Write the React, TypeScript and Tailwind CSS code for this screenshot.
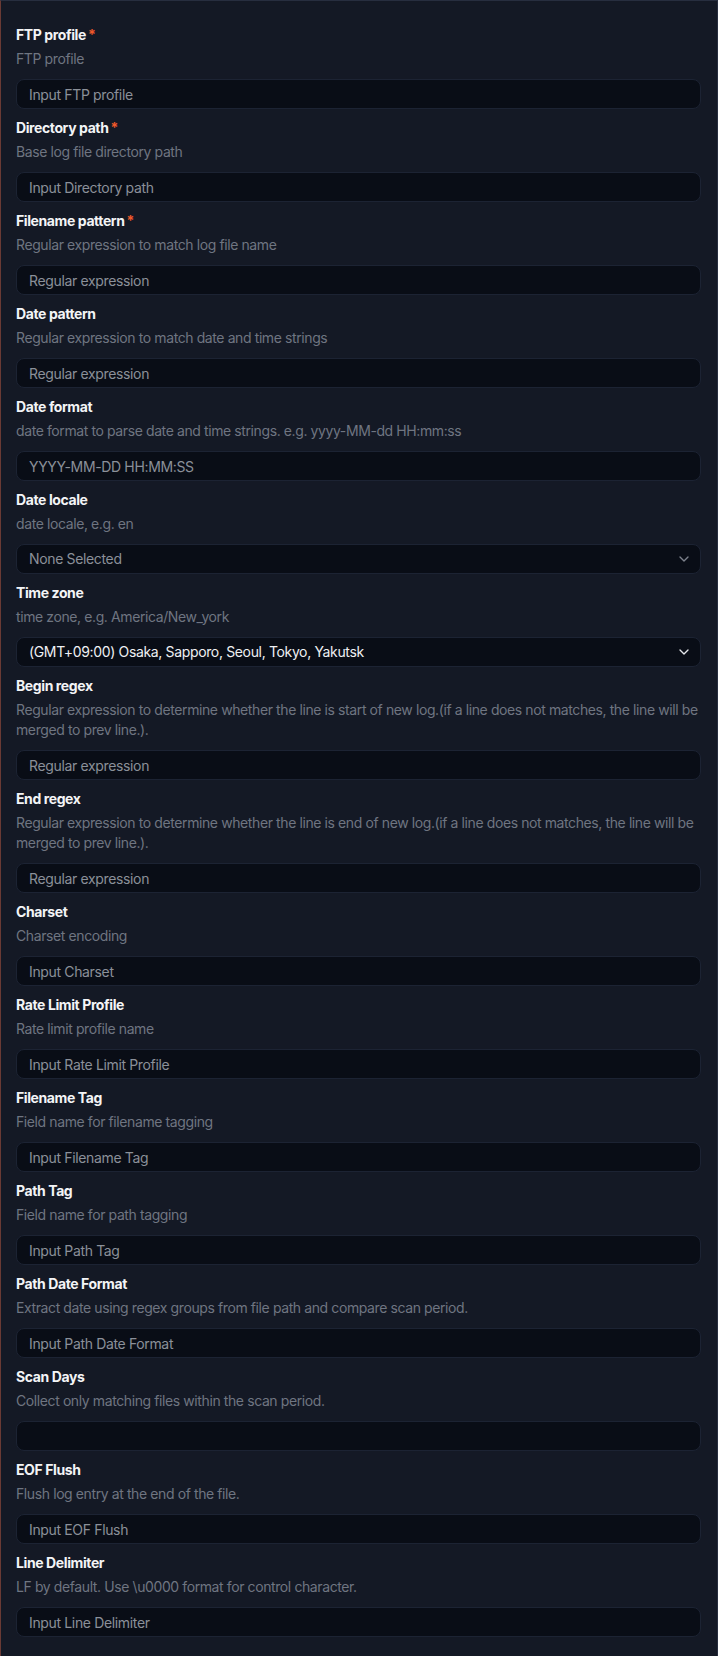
import { ChevronDown } from "lucide-react";

type Field = {
  label: string;
  description: string;
  placeholder?: string;
  required?: boolean;
  select?: { value: string; placeholder?: boolean };
};

const fields: Field[] = [
  { label: "FTP profile", description: "FTP profile", placeholder: "Input FTP profile", required: true },
  { label: "Directory path", description: "Base log file directory path", placeholder: "Input Directory path", required: true },
  { label: "Filename pattern", description: "Regular expression to match log file name", placeholder: "Regular expression", required: true },
  { label: "Date pattern", description: "Regular expression to match date and time strings", placeholder: "Regular expression" },
  { label: "Date format", description: "date format to parse date and time strings. e.g. yyyy-MM-dd HH:mm:ss", placeholder: "YYYY-MM-DD HH:MM:SS" },
  { label: "Date locale", description: "date locale, e.g. en", select: { value: "None Selected", placeholder: true } },
  { label: "Time zone", description: "time zone, e.g. America/New_york", select: { value: "(GMT+09:00) Osaka, Sapporo, Seoul, Tokyo, Yakutsk" } },
  {
    label: "Begin regex",
    description:
      "Regular expression to determine whether the line is start of new log.(if a line does not matches, the line will be merged to prev line.).",
    placeholder: "Regular expression",
  },
  {
    label: "End regex",
    description:
      "Regular expression to determine whether the line is end of new log.(if a line does not matches, the line will be merged to prev line.).",
    placeholder: "Regular expression",
  },
  { label: "Charset", description: "Charset encoding", placeholder: "Input Charset" },
  { label: "Rate Limit Profile", description: "Rate limit profile name", placeholder: "Input Rate Limit Profile" },
  { label: "Filename Tag", description: "Field name for filename tagging", placeholder: "Input Filename Tag" },
  { label: "Path Tag", description: "Field name for path tagging", placeholder: "Input Path Tag" },
  { label: "Path Date Format", description: "Extract date using regex groups from file path and compare scan period.", placeholder: "Input Path Date Format" },
  { label: "Scan Days", description: "Collect only matching files within the scan period.", placeholder: "" },
  { label: "EOF Flush", description: "Flush log entry at the end of the file.", placeholder: "Input EOF Flush" },
  { label: "Line Delimiter", description: "LF by default. Use \\u0000 format for control character.", placeholder: "Input Line Delimiter" },
];

const FormField = ({ field }: { field: Field }) => {
  return (
    <div className="flex flex-col">
      <label className="text-sm leading-5 font-bold text-[#f3f4f6] mb-1">
        {field.label}
        {field.required && <span className="ml-0.5 text-[#f0582a]">*</span>}
      </label>
      <p className="text-sm leading-5 text-[#6f7581]">{field.description}</p>
      {field.select ? (
        <button
          type="button"
          className="mt-2.5 h-[30px] w-full flex items-center justify-between rounded-lg border border-[#1c2333] bg-[#090d16] pl-3 pr-2 text-left text-sm tracking-tight"
        >
          <span className={field.select.placeholder ? "text-[#8b9099]" : "text-[#eef0f3]"}>{field.select.value}</span>
          <ChevronDown
            size={16}
            strokeWidth={2}
            className={field.select.placeholder ? "text-[#7d828c]" : "text-[#e5e7eb]"}
          />
        </button>
      ) : (
        <input
          type="text"
          placeholder={field.placeholder}
          className="mt-2.5 h-[30px] w-full rounded-lg border border-[#1c2333] bg-[#090d16] px-3 text-sm tracking-tight text-[#eef0f3] placeholder:text-[#8b9099] outline-none"
        />
      )}
    </div>
  );
};

const App = () => {
  return (
    <div className="min-h-screen bg-[#141925] border-t border-r border-[#272e3f] border-l border-l-[#6a3a34] pl-[15px] pr-4 pt-6 pb-4 tracking-tight font-['Inter','Noto_Sans',sans-serif]">
      <div className="flex flex-col gap-[9px]">
        {fields.map((field) => (
          <FormField key={field.label} field={field} />
        ))}
      </div>
    </div>
  );
};

export default App;
